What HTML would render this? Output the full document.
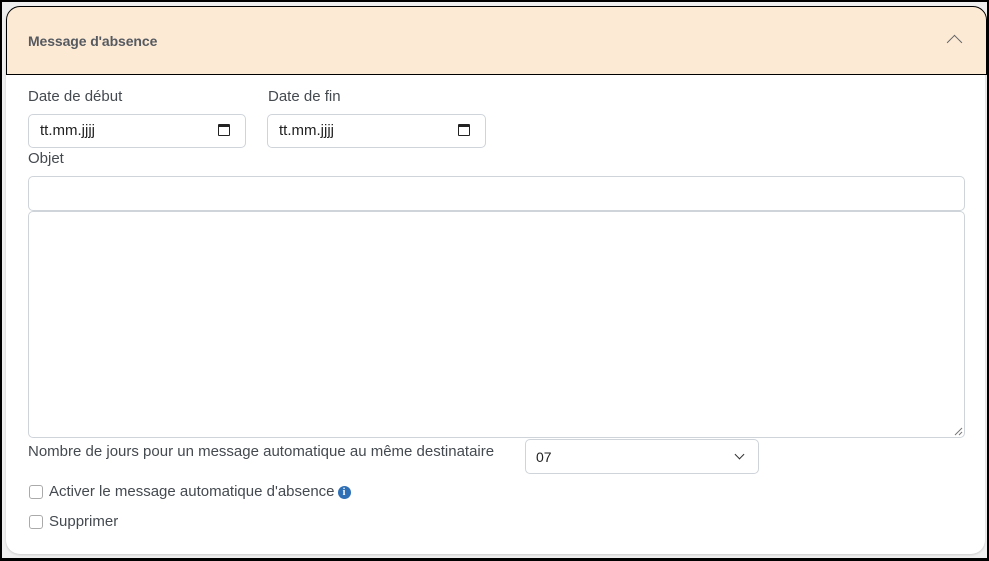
<!DOCTYPE html>
<html><head><meta charset="utf-8"><style>
*{box-sizing:border-box;margin:0;padding:0}
html,body{width:989px;height:561px;overflow:hidden}
body{background:#000;font-family:"Liberation Sans Narrow","Liberation Sans",sans-serif;color:#3a3f44;position:relative}
.frame{position:absolute;left:2px;top:2px;width:985px;height:556px;background:#efefef}
.card{position:absolute;left:4px;top:4px;width:979px;height:548px;background:#fff;border-radius:14px;box-shadow:0 1px 2px rgba(0,0,0,.15)}
.hdr{position:absolute;left:4px;top:4px;width:981px;height:69px;background:#fdead5;border:1px solid #000;border-radius:14px 14px 0 0}
.hdr .t{position:absolute;left:21px;top:26px;font-family:"Liberation Sans",sans-serif;font-size:14px;font-weight:600;color:#555a60;letter-spacing:-.1px}
.chev{position:absolute;left:942px;top:30px;width:11px;height:11px;border-left:1.5px solid #666;border-top:1.5px solid #666;transform:rotate(45deg)}
.lbl{position:absolute;font-size:15px;color:#444a50}
.inp{position:absolute;border:1px solid #ced4da;border-radius:5px;background:#fff}
.date{font-family:"Liberation Sans",sans-serif;font-size:15px;color:#222;padding:7px 0 0 11px}
.cal{position:absolute;right:15px;top:9px;width:12px;height:12px;border:1.5px solid #222;border-top-width:3px;border-radius:1px}
.cb{position:absolute;width:14px;height:14px;border:1px solid #aaa;border-radius:3px;background:#fff}
.info{display:inline-block;width:13px;height:13px;border-radius:50%;background:#2f6fb5;color:#fff;font-size:10px;font-weight:bold;text-align:center;line-height:13px;font-family:"Liberation Serif",serif;vertical-align:1px;margin-left:3px}
.sel{position:absolute;left:536px;top:449px;font-family:"Liberation Sans",sans-serif;font-size:14px;color:#222}
.dd{position:absolute;left:736px;top:451px;width:7px;height:7px;border-right:1.5px solid #333;border-bottom:1.5px solid #333;transform:rotate(45deg)}
</style></head><body>
<div class="frame"><div class="card"></div><div class="hdr"><span class="t">Message d'absence</span><span class="chev"></span></div></div>
<div class="lbl" style="left:28px;top:88px">Date de début</div>
<div class="lbl" style="left:268px;top:88px">Date de fin</div>
<div class="inp date" style="left:28px;top:114px;width:218px;height:34px">tt.mm.jjjj<span class="cal"></span></div>
<div class="inp date" style="left:267px;top:114px;width:219px;height:34px">tt.mm.jjjj<span class="cal"></span></div>
<div class="lbl" style="left:28px;top:150px">Objet</div>
<div class="inp" style="left:28px;top:176px;width:937px;height:35px"></div>
<div class="inp" style="left:28px;top:211px;width:937px;height:227px"><svg style="position:absolute;right:1px;bottom:1px" width="9" height="9"><path d="M8 1L1 8M8 5L5 8" stroke="#777" stroke-width="1"/></svg></div>
<div class="lbl" style="left:28px;top:443px">Nombre de jours pour un message automatique au même destinataire</div>
<div class="inp" style="left:525px;top:439px;width:234px;height:35px"></div>
<div class="sel">07</div><div class="dd"></div>
<div class="cb" style="left:29px;top:485px"></div>
<div class="lbl" style="left:49px;top:483px">Activer le message automatique d'absence<span class="info">i</span></div>
<div class="cb" style="left:29px;top:515px"></div>
<div class="lbl" style="left:49px;top:513px">Supprimer</div>
</body></html>
